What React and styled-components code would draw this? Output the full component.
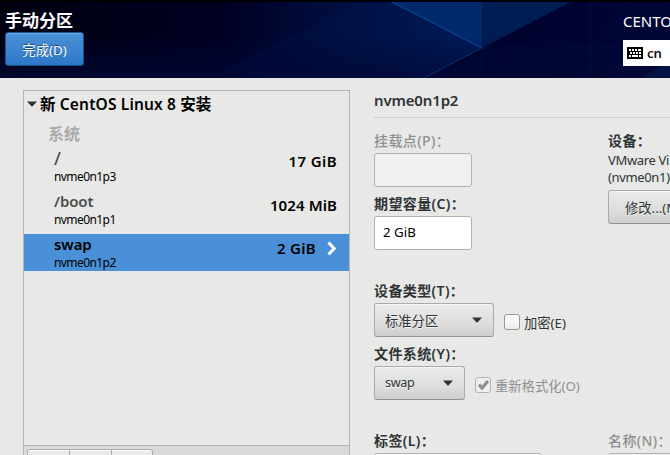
import React from 'react';
import styled, { createGlobalStyle } from 'styled-components';

const GlobalStyle = createGlobalStyle`
  * { box-sizing: border-box; }
  html, body { margin: 0; overflow: hidden; background: #e8e8e6; }
  body { font-family: "Noto Sans", "Noto Sans CJK SC", sans-serif; color: #2e3436; }
`;

const Screen = styled.div`
  width: 670px;
  height: 455px;
  overflow: hidden;
  background: #e8e8e6;
`;

const Header = styled.header`
  position: relative;
  height: 78px;
  display: flex;
  justify-content: space-between;
  overflow: hidden;
  background: #00001c;
`;

const Backdrop = styled.svg`
  position: absolute;
  inset: 0;
`;

const HeaderLeft = styled.div`
  position: relative;
  padding: 11px 0 0 5px;
`;

const HeaderRight = styled.div`
  position: relative;
  width: 47px;
  padding-top: 11px;
`;

/* One line of text, sized by font, line box and tracking. */
const Text = styled.div`
  flex: none;
  white-space: nowrap;
  font-size: ${p => p.$size || 14}px;
  line-height: ${p => p.$line || 20}px;
  height: ${p => p.$line || 20}px;
  font-weight: ${p => p.$weight || 400};
  letter-spacing: ${p => p.$track || 0}px;
  color: ${p => p.$color || 'inherit'};
`;

const DoneButton = styled.button`
  display: flex;
  align-items: center;
  justify-content: center;
  margin-top: 1px;
  padding: 1px 0 0;
  width: 79px;
  height: 34px;
  border: 1px solid #1c5187;
  border-radius: 3px;
  background: linear-gradient(#4a90d9, #3a83cf 60%, #2a76c6);
  box-shadow: inset 0 1px #6ba6e1;
  color: #fff;
  font-family: inherit;
  text-shadow: 0 -1px rgba(0, 0, 0, 0.45);
`;

const Keyboard = styled.div`
  display: flex;
  align-items: center;
  gap: 4px;
  margin-top: 9px;
  padding-left: 4px;
  height: 26px;
  background: #fff;
  color: #111;
`;

const Body = styled.main`
  display: flex;
  height: 377px;
  padding: 12px 0 0 23px;
`;

const Sidebar = styled.aside`
  display: flex;
  flex-direction: column;
  width: 327px;
  height: 400px;
  flex: none;
  border: 1px solid #b5b6b3;
  background: #e8e8e6;
`;

const TreeTitle = styled.div`
  display: flex;
  align-items: center;
  gap: 3px;
  height: 26px;
  padding-left: 3px;
  color: #000;
`;

const Group = styled.div`
  height: 31px;
  padding: 7px 0 0 24px;
`;

const MountRow = styled.div`
  display: flex;
  justify-content: space-between;
  flex: none;
  height: 37px;
  margin-bottom: 6px;
  padding: 0 12px 0 30px;
  color: #000;
  background: ${p => (p.$selected ? '#4a90d9' : 'transparent')};
`;

const MountSize = styled.div`
  display: flex;
  gap: 11px;
  padding-top: ${p => p.$top}px;
`;

const Toolbar = styled.div`
  display: flex;
  flex: none;
  height: 40px;
  margin-top: 168px;
  padding: 3px 0 0 3px;
  border-top: 1px solid #b5b6b3;
  background: #d9d9d7;
`;

const ToolButton = styled.div`
  width: ${p => p.$w}px;
  height: 33px;
  border: 1px solid #aeafac;
  border-left-width: ${p => (p.$first ? 1 : 0)}px;
  border-radius: ${p => (p.$first ? '3px 0 0 3px' : p.$last ? '0 3px 3px 0' : 0)};
  background: linear-gradient(#ececeb, #d6d6d4);
  box-shadow: inset 0 1px #fff;
`;

const Details = styled.section`
  width: 296px;
  margin-left: 24px;
  flex: none;
`;

const Title = styled.div`
  height: 28px;
  border-bottom: 1px solid #cdcdcb;
`;

const Columns = styled.div`
  display: flex;
  padding-top: 13px;
`;

const Column = styled.div`
  flex: none;
  width: ${p => p.$w}px;
`;

const Block = styled.div`
  height: ${p => p.$h}px;
`;

const Entry = styled.div`
  display: flex;
  align-items: center;
  margin-top: 2px;
  width: ${p => p.$w}px;
  height: 34px;
  padding: 0 0 2px 8px;
  border: 1px solid #b1b2af;
  border-radius: 3px;
  color: #000;
  background: ${p => (p.$disabled ? '#f0f0f0' : '#fff')};
`;

const Line = styled.div`
  display: flex;
  margin-top: 2px;
`;

const Combo = styled.button`
  display: flex;
  align-items: center;
  justify-content: space-between;
  flex: none;
  width: ${p => p.$w}px;
  height: 34px;
  margin: 0;
  padding: 0 11px 0 10px;
  border: 1px solid #aaaba8;
  border-bottom-color: #92938f;
  border-radius: 3px;
  background: linear-gradient(#eaeae9, #dededc 60%, #cececc);
  box-shadow: inset 0 1px #f4f4f3;
  color: #2e3436;
  font-family: inherit;
  text-shadow: 0 1px rgba(255, 255, 255, 0.75);

  > div { padding-top: ${p => p.$drop || 0}px; }
`;

const ModifyButton = styled(Combo)`
  justify-content: flex-start;
  padding-left: 16px;
  margin-top: 4px;
`;

const CheckLabel = styled.div`
  display: flex;
  gap: 4px;
  margin-left: 10px;
  padding-top: 11px;

  > div { margin-top: -1px; }
`;

const CheckBox = styled.span`
  display: flex;
  width: 16px;
  height: 16px;
  border: 1px solid ${p => (p.$disabled ? '#b2b3b0' : '#999a97')};
  border-radius: 3px;
  background: ${p => (p.$disabled ? '#efefee' : 'linear-gradient(#fff, #ebebea)')};
`;

const Down = () => (
  <svg width="10" height="6" viewBox="0 0 10 6"><path d="M0 .5h10L5.6 5.2q-.6.6-1.2 0z" fill="#2e3436" /></svg>
);

const KeyboardIcon = () => (
  <svg width="16" height="12" viewBox="0 0 16 12" shapeRendering="crispEdges">
    <rect width="16" height="12" rx="1" fill="#000" />
    <g fill="#fff">
      {[2, 5, 8, 11].map(x => <rect key={x} x={x} y="2" width="2" height="2" />)}
      <rect x="13" y="2" width="1" height="2" />
      {[3, 6, 9, 12].map(x => <rect key={x} x={x} y="5" width="2" height="2" />)}
      <rect x="2" y="8" width="2" height="2" />
      <rect x="5" y="8" width="6" height="2" />
      <rect x="12" y="8" width="2" height="2" />
    </g>
  </svg>
);

const HeaderArt = () => (
  <Backdrop width="670" height="78" viewBox="0 0 670 78">
    <defs>
      <linearGradient id="base">
        <stop offset="0" stopColor="#00000f" />
        <stop offset=".2" stopColor="#00001c" />
        <stop offset=".34" stopColor="#000023" />
        <stop offset=".5" stopColor="#000e40" />
        <stop offset=".72" stopColor="#001a55" />
      </linearGradient>
      <linearGradient id="facet" gradientUnits="userSpaceOnUse" x1="223" x2="482" y1="0" y2="0">
        <stop offset="0" stopColor="#000633" />
        <stop offset=".5" stopColor="#001145" />
        <stop offset="1" stopColor="#001b58" />
      </linearGradient>
      <linearGradient id="right">
        <stop offset="0" stopColor="#000029" />
        <stop offset="1" stopColor="#000535" />
      </linearGradient>
      <linearGradient id="shade" x2="0" y2="1">
        <stop offset=".45" stopColor="#000836" stopOpacity="0" />
        <stop offset="1" stopColor="#000836" stopOpacity=".75" />
      </linearGradient>
    </defs>
    <rect width="670" height="78" fill="url(#base)" />
    <path d="M114 2L156 44V2z" fill="#00001f" opacity=".7" />
    <path d="M358 2L223 70V78H482V2z" fill="url(#facet)" />
    <path d="M392 2H482V48z" fill="#002a6b" />
    <path d="M482 48L424 78H670V2H482z" fill="url(#right)" />
    <path d="M482 2H571L482 48z" fill="#001c55" />
    <rect width="670" height="78" fill="url(#shade)" />
    <path d="M392 2L482 48" fill="none" stroke="#084497" strokeWidth="1.1" />
    <path d="M482 48L424 78" fill="none" stroke="#06316f" strokeWidth="1" />
    <path d="M482 48V78M482 48H670M482 48L508 76M590 2V78M632 6L590 48L620 78" fill="none" stroke="#0a2860" strokeWidth="1" opacity=".3" />
    <path d="M670 62L640 78H670z" fill="#002052" opacity=".5" />
    <rect width="670" height="2" fill="#000" />
  </Backdrop>
);

const Mount = ({ name, device, size, track = 0.1, top = 12, nameColor = '#4b4d4d', selected }) => (
  <MountRow $selected={selected}>
    <div>
      <Text $size={name === '/' ? 18 : 15} $line={21} $weight={name === '/' ? 500 : 600} $track={-0.1} $color={nameColor}>{name}</Text>
      <Text $size={12} $line={16} $track={-0.58}>{device}</Text>
    </div>
    <MountSize $top={top - 8}>
      <Text $size={15} $line={20} $weight={600} $track={track}>{size}</Text>
      {selected && (
        <svg width="10" height="20" viewBox="0 0 10 20"><path d="M1.5 4.5L7.2 10.5L1.5 16.5" fill="none" stroke="#fff" strokeWidth="3" /></svg>
      )}
    </MountSize>
  </MountRow>
);

const Label = ({ children, disabled }) => (
  <Text $size={14} $weight={disabled ? 500 : 600} $track={0.4} $color={disabled ? '#8d9091' : '#2e3436'}>{children}</Text>
);

export default function App() {
  return (
    <Screen>
      <GlobalStyle />
      <Header>
        <HeaderArt />
        <HeaderLeft>
          <Text $size={17} $weight={600} $color="#fff">手动分区</Text>
          <DoneButton><Text $size={13.3}>完成(D)</Text></DoneButton>
        </HeaderLeft>
        <HeaderRight>
          <Text $size={15} $color="#fff">CENTO</Text>
          <Keyboard><KeyboardIcon /><Text $size={13} $weight={600}>cn</Text></Keyboard>
        </HeaderRight>
      </Header>
      <Body>
        <Sidebar>
          <TreeTitle><Down /><Text $size={15.5} $weight={600} $track={0.15}>新 CentOS Linux 8 安装</Text></TreeTitle>
          <Group><Text $size={16} $weight={600} $color="#aaaba9">系统</Text></Group>
          <Mount name="/" device="nvme0n1p3" size="17 GiB" track={0.4} top={11} />
          <Mount name="/boot" device="nvme0n1p1" size="1024 MiB" />
          <Mount name="swap" device="nvme0n1p2" size="2 GiB" track={0.3} nameColor="#000" selected />
          <Toolbar><ToolButton $w={43} $first /><ToolButton $w={42} /><ToolButton $w={41} $last /></Toolbar>
        </Sidebar>
        <Details>
          <Title><Text $size={15} $weight={600} $track={-0.15}>nvme0n1p2</Text></Title>
          <Columns>
            <Column $w={234}>
              <Block $h={63}><Label disabled>挂载点(P)：</Label><Entry $w={98} $disabled /></Block>
              <Block $h={87}><Label>期望容量(C)：</Label><Entry $w={98}><Text $size={13.3}>2 GiB</Text></Entry></Block>
              <Block $h={63}>
                <Label>设备类型(T)：</Label>
                <Line>
                  <Combo $w={120} $drop={1}><Text $size={13.3}>标准分区</Text><Down /></Combo>
                  <CheckLabel><CheckBox /><Text $size={13.3}>加密(E)</Text></CheckLabel>
                </Line>
              </Block>
              <Block $h={87}>
                <Label>文件系统(Y)：</Label>
                <Line>
                  <Combo $w={91}><Text $size={12.6} $track={-0.35}>swap</Text><Down /></Combo>
                  <CheckLabel>
                    <CheckBox $disabled><svg width="14" height="14" viewBox="0 0 14 14"><path d="M3 6.5l3 3.5L12 3" fill="none" stroke="#8d9091" strokeWidth="3.2" /></svg></CheckBox>
                    <Text $size={13.3} $color="#8d9091">重新格式化(O)</Text>
                  </CheckLabel>
                </Line>
              </Block>
              <Label>标签(L)：</Label>
              <Entry $w={168} />
            </Column>
            <Column $w={200}>
              <Block $h={300}>
                <Label>设备：</Label>
                <Text $size={13} $line={18} $track={-0.35}>VMware Vi</Text>
                <Text $size={13} $line={17} $track={-0.35}>(nvme0n1)</Text>
                <ModifyButton $w={100} $drop={1}><Text $size={13.3}>修改...(M)</Text></ModifyButton>
              </Block>
              <Label disabled>名称(N)：</Label>
              <Entry $w={168} $disabled />
            </Column>
          </Columns>
        </Details>
      </Body>
    </Screen>
  );
}
